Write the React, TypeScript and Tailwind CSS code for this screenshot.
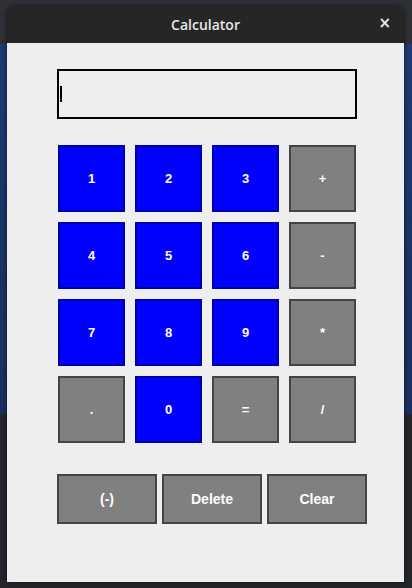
export default function App() {
  const keys = [
    { label: "1", op: false },
    { label: "2", op: false },
    { label: "3", op: false },
    { label: "+", op: true },
    { label: "4", op: false },
    { label: "5", op: false },
    { label: "6", op: false },
    { label: "-", op: true },
    { label: "7", op: false },
    { label: "8", op: false },
    { label: "9", op: false },
    { label: "*", op: true },
    { label: ".", op: true },
    { label: "0", op: false },
    { label: "=", op: true },
    { label: "/", op: true },
  ];

  return (
    <div className="relative h-[588px] w-[412px] overflow-hidden bg-[#1c1e24]">
      {/* desktop behind the window */}
      <div className="absolute left-0 top-0 h-[44px] w-full bg-[#2e3036]" />
      <div className="absolute left-0 top-[44px] h-[370px] w-full bg-gradient-to-b from-[#1d3a72] to-[#1a2f5c]" />
      <div className="absolute left-0 top-[414px] h-[174px] w-full bg-[#24262b]" />

      <div className="relative pl-[7px] pt-[6px]">
        <div className="w-[397px] overflow-hidden rounded-t-[8px] shadow-[0_0_4px_rgba(0,0,0,0.6)]">
          <div className="relative flex h-[37px] items-center justify-center bg-[#262626] font-['Open_Sans',sans-serif] text-[14px] font-semibold text-[#e8e8e8]">
            Calculator
            <span className="absolute right-[13px] top-[10px] font-['DejaVu_Sans',sans-serif] text-[15px] font-bold leading-[15px]">×</span>
          </div>
          <div className="h-[539px] bg-[#eeeeee] pl-[50px] pt-[26px] font-['Liberation_Sans',Arial,sans-serif]">
            <div className="flex h-[50px] w-[300px] items-center border-2 border-black bg-[#eeeeee] pl-[1px]">
              <div className="h-[16px] w-[2px] bg-black" />
            </div>

            <div className="ml-[1px] mt-[26px] grid w-[298px] grid-cols-4 gap-[10px]">
              {keys.map((k) => (
                <button
                  key={k.label}
                  className={
                    k.op
                      ? "flex h-[67px] w-[67px] items-center justify-center border-2 border-[#444444] bg-[#808080] text-[13px] font-bold text-white"
                      : "flex h-[67px] w-[67px] items-center justify-center border-2 border-[#0000a8] bg-[#0000ff] text-[13px] font-bold text-white"
                  }
                >
                  {k.label}
                </button>
              ))}
            </div>

            <div className="mt-[31px] flex gap-[5px]">
              {["(-)", "Delete", "Clear"].map((l) => (
                <button
                  key={l}
                  className="flex h-[50px] w-[100px] items-center justify-center border-2 border-[#444444] bg-[#808080] text-[14px] font-bold text-white"
                >
                  {l}
                </button>
              ))}
            </div>
          </div>
        </div>
      </div>
    </div>
  );
}
